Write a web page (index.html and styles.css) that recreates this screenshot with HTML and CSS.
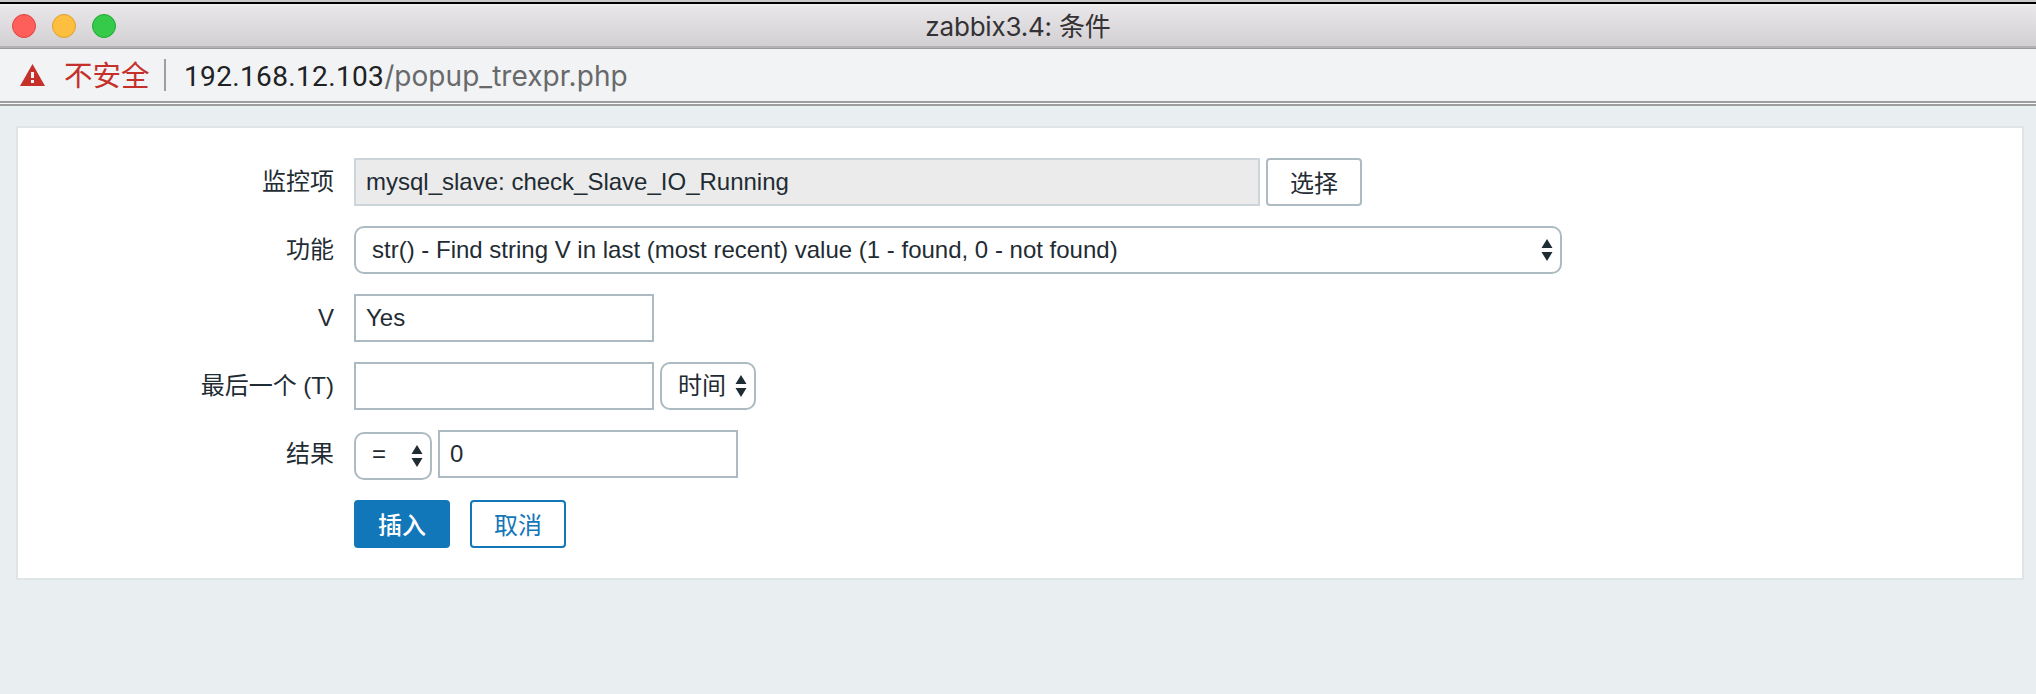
FILE: index.html
```html
<!DOCTYPE html>
<html lang="zh-CN">
<head>
<meta charset="utf-8">
<title>zabbix3.4: 条件</title>
<link rel="stylesheet" href="styles.css">
</head>
<body>
<header class="titlebar">
  <div class="lights"><i class="light red"></i><i class="light yellow"></i><i class="light green"></i></div>
  <div class="window-title">zabbix3.4: 条件</div>
</header>
<div class="addressbar">
  <svg class="warning" width="26" height="22" viewBox="0 0 26 22"><path d="M12.5 0L25 22H0Z" fill="#c5302a"/><path d="M11 8h3v6h-3zM11 16h3v3h-3z" fill="#f1f3f4"/></svg>
  <span class="insecure">不安全</span>
  <span class="divider"></span>
  <span class="url"><span class="host">192.168.12.103</span><span class="path">/popup_trexpr.php</span></span>
</div>
<main class="page">
  <form class="panel">
    <div class="row">
      <label class="label">监控项</label>
      <div class="field item readonly">mysql_slave: check_Slave_IO_Running</div>
      <button type="button" class="btn grey">选择</button>
    </div>
    <div class="row">
      <label class="label">功能</label>
      <div class="select function"><span class="function-text">str() - Find string V in last (most recent) value (1 - found, 0 - not found)</span><svg class="arrows" width="12" height="22" viewBox="0 0 12 22"><path d="M6 0L11.5 9H.5ZM.5 13H11.5L6 22Z"/></svg></div>
    </div>
    <div class="row">
      <label class="label">V</label>
      <div class="field">Yes</div>
    </div>
    <div class="row">
      <label class="label">最后一个 (T)</label>
      <div class="field"></div>
      <div class="select time"><span>时间</span><svg class="arrows" width="12" height="22" viewBox="0 0 12 22"><path d="M6 0L11.5 9H.5ZM.5 13H11.5L6 22Z"/></svg></div>
    </div>
    <div class="row">
      <label class="label">结果</label>
      <div class="select operator"><span>=</span><svg class="arrows" width="12" height="22" viewBox="0 0 12 22"><path d="M6 0L11.5 9H.5ZM.5 13H11.5L6 22Z"/></svg></div>
      <div class="field">0</div>
    </div>
    <div class="row actions">
      <span class="label"></span>
      <button type="button" class="btn primary">插入</button>
      <button type="button" class="btn outline">取消</button>
    </div>
  </form>
</main>
</body>
</html>
```
FILE: styles.css
```css
* { box-sizing: border-box; }
body {
  margin: 0;
  height: 694px;
  overflow: hidden;
  display: flex;
  flex-direction: column;
  background: #e9eef1;
  color: #1f2c33;
  font-family: "Liberation Sans", "Noto Sans CJK SC", sans-serif;
  font-size: 24px;
}
.titlebar {
  height: 49px;
  flex: none;
  display: grid;
  grid-template-columns: 1fr auto 1fr;
  align-items: center;
  padding: 3px 0 0 12px;
  background:
    linear-gradient(#c9c9c9 0 2px, #000 2px 4px, transparent 4px 46px, #b4b2b4 46px 48px, #9b999b 48px),
    linear-gradient(#f2f1f2 4px, #e8e6e8 7px, #d2d0d2 46px);
}
.lights { display: flex; gap: 16px; }
.light { width: 24px; height: 24px; border-radius: 50%; border: 1px solid; }
.red { background: #fe5f5a; border-color: #e1443f; }
.yellow { background: #febf40; border-color: #dd9f32; }
.green { background: #35ca4a; border-color: #20a92f; }
.window-title {
  font-family: Inter, "Noto Sans CJK SC", sans-serif;
  font-size: 26px;
  line-height: 40px;
  color: #343234;
  position: relative;
  left: -6px;
  padding-top: 1px;
  letter-spacing: -.2px;
}
.addressbar {
  height: 57px;
  flex: none;
  display: flex;
  align-items: center;
  padding: 0 20px 3px;
  background: #f1f3f4;
  border-bottom: 2px solid #9d9d9d;
  box-shadow: inset 0 -1px #fafafa, inset 0 -3px #9d9d9d;
  font-family: Inter, "Noto Sans CJK SC", sans-serif;
  font-size: 28px;
}
.insecure { margin-left: 18px; color: #c5302a; width: 85px; white-space: nowrap; line-height: 40px; padding-top: 2px; font-size: 28.5px; }
.divider { width: 2px; height: 32px; margin: 0 0 0 15px; background: #9e9fa0; }
.url { margin-left: 18px; padding-top: 2px; line-height: 40px; white-space: nowrap; }
.host { color: #202124; font-family: Roboto, sans-serif; letter-spacing: .35px; }
.path { color: #68696b; letter-spacing: .05px; }
.page { padding: 20px 12px 0 16px; }
.panel {
  height: 454px;
  padding: 30px 0 0;
  border: 2px solid #dfe4e7;
  background: #fff;
  display: flex;
  flex-direction: column;
  gap: 20px;
}
.row { display: flex; gap: 6px; height: 48px; }
.label { width: 316px; margin-right: 14px; text-align: right; line-height: 48px; }
.field {
  width: 300px;
  height: 48px;
  border: 2px solid #acbbc2;
  padding: 0 10px;
  line-height: 44px;
  white-space: nowrap;
}
.item { width: 906px; }
.readonly { background: #ebebeb; border-color: #ccd5d9; }
.select {
  height: 48px;
  display: flex;
  justify-content: space-between;
  align-items: center;
  border: 2px solid #acbbc2;
  border-radius: 10px;
  padding: 0 7px 0 16px;
  line-height: 44px;
  white-space: nowrap;
}
.function { width: 1208px; }
.time { width: 96px; }
.operator { width: 78px; margin-top: 2px; }
.operator span { padding-bottom: 4px; }
.arrows { fill: #1f2c33; flex: none; }
.btn {
  width: 96px;
  height: 48px;
  padding: 3px 0 0;
  border: 2px solid #acbbc2;
  border-radius: 4px;
  background: #fff;
  color: #1f2c33;
  font: inherit;
  line-height: 42px;
}
.actions { gap: 20px; margin-top: 2px; }
.actions .label { margin-right: 0; }
.primary, .outline { padding-top: 3px; }
.primary { background: #1277b8; border-color: #1277b8; color: #fff; font-weight: 500; }
.outline { border-color: #1277b8; color: #1277b8; }
```
